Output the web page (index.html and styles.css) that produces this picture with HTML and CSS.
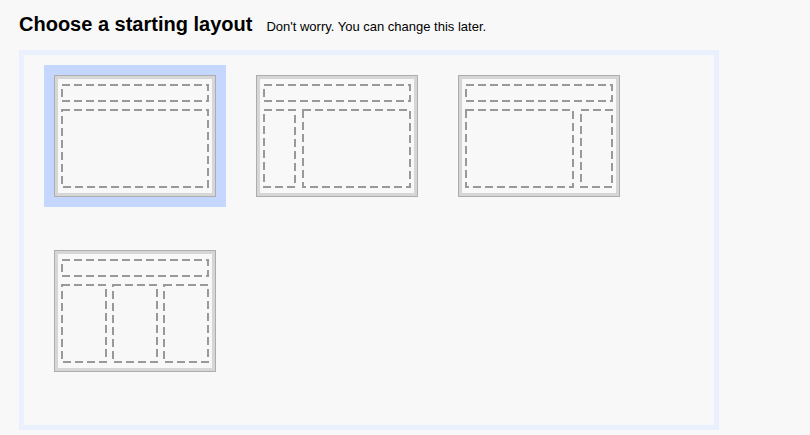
FILE: index.html
```html
<!DOCTYPE html>
<html>
<head>
<meta charset="utf-8">
<link rel="stylesheet" href="styles.css">
</head>
<body>
<div class="header">
  <h1 class="title">Choose a starting layout</h1>
  <span class="hint">Don't worry. You can change this later.</span>
</div>
<div class="frame">
  <div class="grid">
    <div class="tile selected">
      <div class="thumb">
        <svg width="160" height="120" viewBox="1 1 160 120">
          <rect class="d" x="8" y="10" width="146" height="16"/>
          <rect class="d" x="8" y="35" width="146" height="77"/>
        </svg>
      </div>
    </div>
    <div class="tile">
      <div class="thumb">
        <svg width="160" height="120" viewBox="1 1 160 120">
          <rect class="d" x="8" y="10" width="146" height="16"/>
          <rect class="d" x="8" y="35" width="31" height="77"/>
          <rect class="d" x="47" y="35" width="107" height="77"/>
        </svg>
      </div>
    </div>
    <div class="tile">
      <div class="thumb">
        <svg width="160" height="120" viewBox="1 1 160 120">
          <rect class="d" x="8" y="10" width="146" height="16"/>
          <rect class="d" x="8" y="35" width="107" height="77"/>
          <rect class="d" x="123" y="35" width="31" height="77"/>
        </svg>
      </div>
    </div>
    <div class="tile">
      <div class="thumb">
        <svg width="160" height="120" viewBox="1 1 160 120">
          <rect class="d" x="8" y="10" width="146" height="16"/>
          <rect class="d" x="8" y="35" width="44" height="77"/>
          <rect class="d" x="59" y="35" width="44" height="77"/>
          <rect class="d" x="110" y="35" width="44" height="77"/>
        </svg>
      </div>
    </div>
  </div>
</div>
</body>
</html>
```
FILE: styles.css
```css
html, body {
  margin: 0;
  padding: 0;
  background: #f8f8f8;
}
body {
  font-family: "Liberation Sans", Arial, sans-serif;
  color: #000;
  width: 810px;
  height: 435px;
  overflow: hidden;
}
.header {
  display: flex;
  align-items: baseline;
  padding: 12px 0 0 19px;
  height: 38px;
  box-sizing: border-box;
}
.title {
  margin: 0;
  font-size: 20px;
  line-height: 24px;
  font-weight: bold;
}
.hint {
  margin-left: 14px;
  font-size: 13px;
}
.frame {
  margin: 12px 0 0 19px;
  width: 700px;
  height: 380px;
  box-sizing: border-box;
  border: 5px solid #ebf0ff;
  padding: 10px 20px;
}
.grid {
  display: grid;
  grid-template-columns: repeat(3, 182px);
  column-gap: 20px;
  row-gap: 33px;
}
.tile {
  width: 182px;
  height: 142px;
  box-sizing: border-box;
  padding: 10px;
}
.tile.selected {
  background: #c6d7ff;
}
.thumb {
  width: 162px;
  height: 122px;
  box-sizing: border-box;
  border: 1px solid #adadad;
  box-shadow: inset 0 0 0 3px #d6d6d6;
  background: #f8f8f8;
}
.thumb svg {
  display: block;
}
.d {
  fill: none;
  stroke: #999;
  stroke-width: 2;
  stroke-dasharray: 8 4;
  shape-rendering: crispEdges;
}
```
